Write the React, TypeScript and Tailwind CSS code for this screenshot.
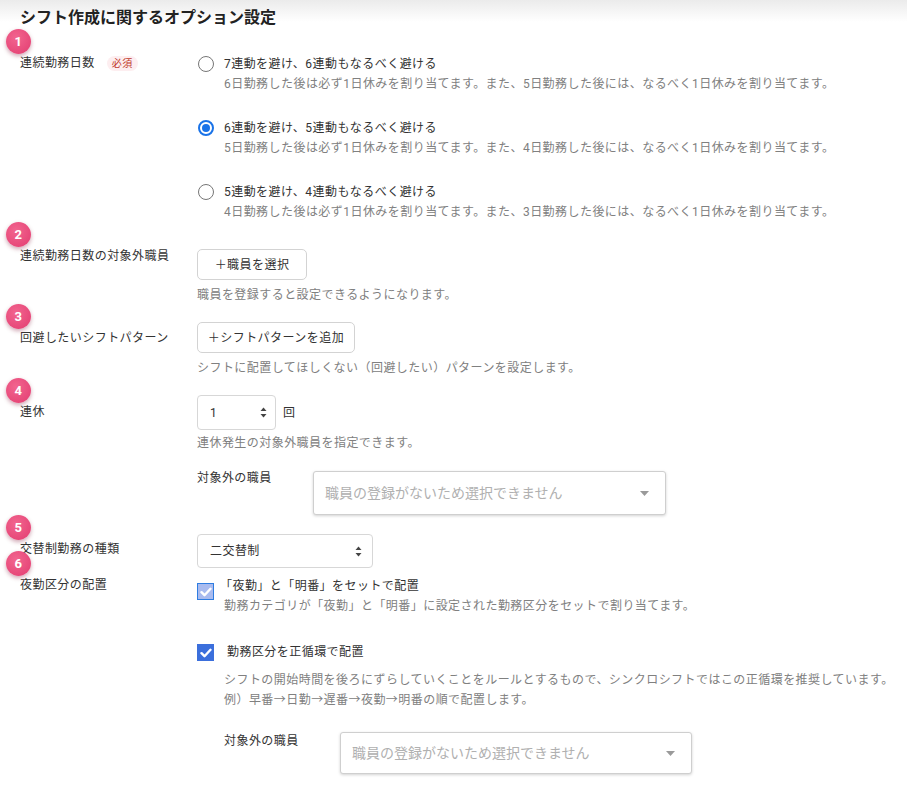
import React from 'react';

const Badge = ({ n }: { n: number }) => (
  <span className="absolute -left-[14px] -top-[25px] flex h-[25px] w-[25px] items-center justify-center rounded-full bg-[radial-gradient(circle_at_40%_35%,#f2658f,#e23c70)] text-[13px] font-bold leading-none text-white shadow-[0_2px_4px_rgba(120,0,40,0.35)]">
    {n}
  </span>
);

const Label = ({ n, pt, children }: { n: number; pt: string; children: React.ReactNode }) => (
  <div className={`w-[197px] shrink-0 pl-[20px] ${pt}`}>
    <div className="relative flex items-center leading-[18px] text-[#333]">
      <Badge n={n} />
      {children}
    </div>
  </div>
);

const Radio = ({ checked, title, desc }: { checked?: boolean; title: string; desc: string }) => (
  <div className="flex">
    <div className="mt-[1px] flex h-[17px] w-[17px] shrink-0 items-center justify-center">
      {checked ? (
        <span className="flex h-[16px] w-[16px] items-center justify-center rounded-full border-2 border-[#1a73e8]">
          <span className="h-[8px] w-[8px] rounded-full bg-[#1a73e8]" />
        </span>
      ) : (
        <span className="h-[16px] w-[16px] rounded-full border-[1.5px] border-[#767676]" />
      )}
    </div>
    <div className="ml-[10px]">
      <div className="leading-5 text-[#333]">{title}</div>
      <div className="leading-5 text-[#808080]">{desc}</div>
    </div>
  </div>
);

const Stepper = () => (
  <svg width="7" height="11" viewBox="0 0 7 11">
    <path d="M3.5 0.5 L6.5 4 L0.5 4 Z" fill="#444" />
    <path d="M3.5 10.5 L6.5 7 L0.5 7 Z" fill="#444" />
  </svg>
);

const Check = () => (
  <svg width="12" height="10" viewBox="0 0 12 10">
    <path d="M1.5 5.2 L4.5 8.2 L10.5 1.8" fill="none" stroke="white" strokeWidth="2.4" strokeLinecap="round" strokeLinejoin="round" />
  </svg>
);

const StaffSelect = () => (
  <div className="flex h-full w-full items-center justify-between rounded-[3px] border border-[#cfcfcf] bg-white pl-[11px] pr-[16px] text-[14px] tracking-normal text-[#b0b0b0] shadow-[0_1px_3px_rgba(0,0,0,0.18)]">
    <span>職員の登録がないため選択できません</span>
    <svg width="9" height="5" viewBox="0 0 9 5">
      <path d="M0 0 L9 0 L4.5 5 Z" fill="#9a9a9a" />
    </svg>
  </div>
);

export default function App() {
  return (
    <div className="min-h-screen w-full bg-[linear-gradient(to_bottom,#ebebeb_0px,#ffffff_22px)] pb-6 font-['Roboto','Noto_Sans_CJK_JP',sans-serif] text-[12px] tracking-[0.45px]">
      <h1 className="pl-[20px] pt-[6px] text-[16px] font-bold leading-[24px] tracking-normal text-[#222]">
        シフト作成に関するオプション設定
      </h1>

      {/* 1 */}
      <div className="mt-[24px] flex">
        <Label n={1} pt="pt-0">
          連続勤務日数
          <span className="ml-[12px] rounded-[8px] bg-[#fdeef0] px-[5px] text-[10px] leading-[15px] text-[#c0392b]">必須</span>
        </Label>
        <div className="flex flex-col gap-[24px]">
          <Radio
            title="7連動を避け、6連動もなるべく避ける"
            desc="6日勤務した後は必ず1日休みを割り当てます。また、5日勤務した後には、なるべく1日休みを割り当てます。"
          />
          <Radio
            checked
            title="6連動を避け、5連動もなるべく避ける"
            desc="5日勤務した後は必ず1日休みを割り当てます。また、4日勤務した後には、なるべく1日休みを割り当てます。"
          />
          <Radio
            title="5連動を避け、4連動もなるべく避ける"
            desc="4日勤務した後は必ず1日休みを割り当てます。また、3日勤務した後には、なるべく1日休みを割り当てます。"
          />
        </div>
      </div>

      {/* 2 */}
      <div className="mt-[27px] flex">
        <Label n={2} pt="-mt-[2px]">連続勤務日数の対象外職員</Label>
        <div>
          <button className="flex h-[31px] w-[110px] items-center justify-center rounded-[5px] border border-[#d3d3d3] bg-white text-[#333]">
            ＋職員を選択
          </button>
          <div className="mt-[6px] leading-[18px] text-[#808080]">職員を登録すると設定できるようになります。</div>
        </div>
      </div>

      {/* 3 */}
      <div className="mt-[18px] flex">
        <Label n={3} pt="pt-[7px]">回避したいシフトパターン</Label>
        <div>
          <button className="flex h-[31px] w-[158px] items-center justify-center rounded-[5px] border border-[#d3d3d3] bg-white text-[#333]">
            ＋シフトパターンを追加
          </button>
          <div className="mt-[6px] leading-[18px] text-[#808080]">シフトに配置してほしくない（回避したい）パターンを設定します。</div>
        </div>
      </div>

      {/* 4 */}
      <div className="mt-[18px] flex">
        <Label n={4} pt="pt-[8px]">連休</Label>
        <div>
          <div className="flex items-center">
            <div className="flex h-[35px] w-[79px] items-center justify-between rounded-[4px] border border-[#d7d7d7] bg-white pl-[12px] pr-[8px] text-[#333]">
              <span>1</span>
              <Stepper />
            </div>
            <span className="ml-[7px] text-[#333]">回</span>
          </div>
          <div className="mt-[4px] leading-[18px] text-[#808080]">連休発生の対象外職員を指定できます。</div>
          <div className="mt-[17px] flex">
            <div className="w-[116px] shrink-0 leading-[18px] text-[#333]">対象外の職員</div>
            <div className="mt-[2px] h-[44px] w-[353px]">
              <StaffSelect />
            </div>
          </div>
        </div>
      </div>

      {/* 5 */}
      <div className="mt-[19px] flex">
        <Label n={5} pt="pt-[6px]">交替制勤務の種類</Label>
        <div className="flex h-[34px] w-[176px] items-center justify-between rounded-[4px] border border-[#d7d7d7] bg-white pl-[12px] pr-[10px] text-[#333]">
          <span>二交替制</span>
          <Stepper />
        </div>
      </div>

      {/* 6 */}
      <div className="mt-[8px] flex">
        <Label n={6} pt="pt-0">夜勤区分の配置</Label>
        <div>
          <div className="flex">
            <span className="mt-[7px] flex h-[17px] w-[17px] shrink-0 items-center justify-center border border-[#2f7de1] bg-[#a9bbef]">
              <Check />
            </span>
            <div className="ml-[10px]">
              <div className="-ml-[4px] leading-5 text-[#333]">「夜勤」と「明番」をセットで配置</div>
              <div className="leading-5 text-[#808080]">勤務カテゴリが「夜勤」と「明番」に設定された勤務区分をセットで割り当てます。</div>
            </div>
          </div>

          <div className="mt-[26px] flex">
            <span className="mt-[2px] flex h-[17px] w-[17px] shrink-0 items-center justify-center bg-[#3b6fdc]">
              <Check />
            </span>
            <div className="ml-[10px]">
              <div className="ml-[3px] leading-5 text-[#333]">勤務区分を正循環で配置</div>
              <div className="mt-[8px] leading-5 text-[#808080]">
                シフトの開始時間を後ろにずらしていくことをルールとするもので、シンクロシフトではこの正循環を推奨しています。
                <br />
                例）早番→日勤→遅番→夜勤→明番の順で配置します。
              </div>
              <div className="mt-[22px] flex">
                <div className="w-[116px] shrink-0 leading-[18px] text-[#333]">対象外の職員</div>
                <div className="h-[42px] w-[352px]">
                  <StaffSelect />
                </div>
              </div>
            </div>
          </div>
        </div>
      </div>
    </div>
  );
}
